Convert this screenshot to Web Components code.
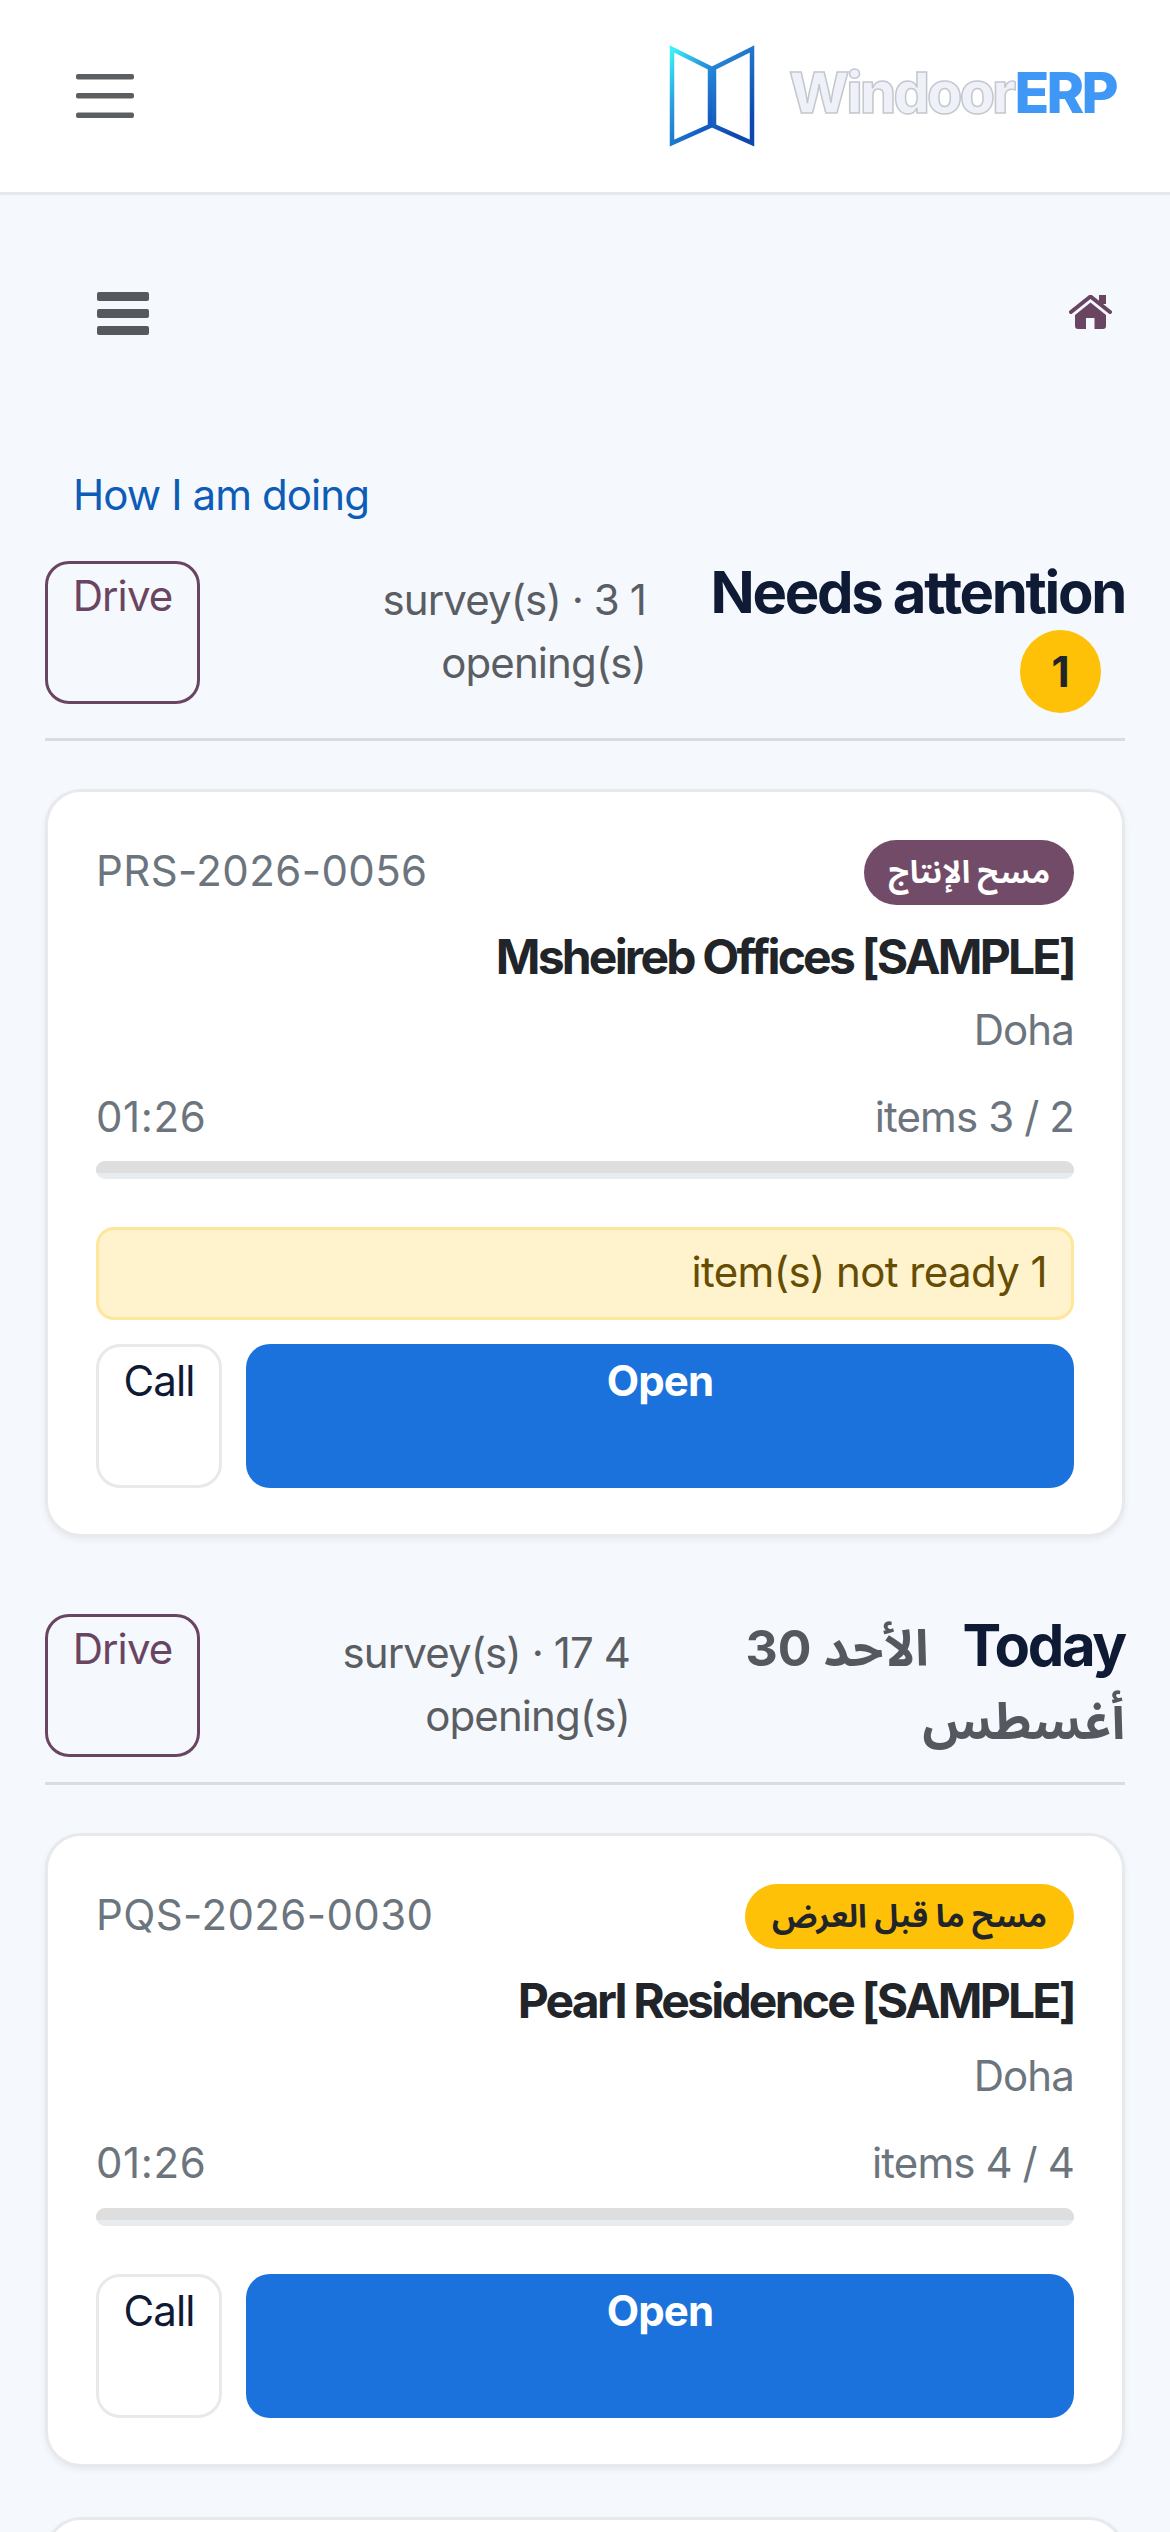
<!DOCTYPE html>
<html lang="ar" dir="rtl"><head><meta charset="utf-8"><title>WindoorERP</title>
<style>
html,body{margin:0;height:2532px;overflow:hidden;background:#f5f8fd;font-family:Inter,"Noto Sans Arabic","Noto Naskh Arabic",sans-serif;font-size:42px;color:#212529;letter-spacing:-.9px}
x-page{display:block}
</style></head><body>
<x-page>
<x-topbar></x-topbar>
<x-subbar></x-subbar>
<x-link>How I am doing</x-link>
<x-sechead sumw="300" sumgap="146" style="margin-top:31px"><span slot="title">Needs attention <x-count>1</x-count></span>1 survey(s) · 3 opening(s)</x-sechead>
<x-card code="PRS-2026-0056" status="مسح الإنتاج" tone="plum" name="Msheireb Offices [SAMPLE]" city="Doha" time="01:26" items="2 / 3 items" alert="1 item(s) not ready" style="--bm:13px"></x-card>
<x-sechead sumw="320" sumgap="110" style="margin-top:77px"><span slot="title">Today<x-date>الأحد 30 أغسطس</x-date></span>4 survey(s) · 17 opening(s)</x-sechead>
<x-card code="PQS-2026-0030" status="مسح ما قبل العرض" tone="amber" name="Pearl Residence [SAMPLE]" city="Doha" time="01:26" items="4 / 4 items" style="--cm:7px"></x-card>
<x-card blank style="margin-top:50px"></x-card>
</x-page>
<script>
function def(name,css,html){
  customElements.define(name,class extends HTMLElement{
    constructor(){super();this.attachShadow({mode:'open'});}
    connectedCallback(){this.shadowRoot.innerHTML='<style>'+css+'</style>'+(typeof html==='function'?html(this):html);}
  });
}
const burger=`<svg width="58" height="44" viewBox="0 0 58 44" fill="#5c5f62"><rect y="0" width="58" height="5.500" rx="2"/><rect y="19" width="58" height="5.500" rx="2"/><rect y="38.500" width="58" height="5.500" rx="2"/></svg>`;
def('x-topbar',`:host{display:flex;direction:ltr;justify-content:space-between;align-items:center;box-sizing:border-box;height:195px;background:#fff;border-bottom:3px solid #e6e8eb;padding:0 54px 0 76px}
svg{display:block}.logo{display:flex;align-items:center;gap:34px}
.word{font:800 57px/1 Inter,sans-serif;letter-spacing:-2.7px;color:#eef1f8;-webkit-text-stroke:1.5px #c4c7cd;margin-top:-8px}
.word b{font-weight:800;color:#3f97f6;-webkit-text-stroke:0}`,
`${burger}<div class="logo"><svg width="86" height="102" viewBox="0 0 86 102" fill="none" stroke-width="4.500"><defs>
<linearGradient id="a" x1="0" y1="0" x2=".6" y2="1"><stop offset="0" stop-color="#3df2f7"/><stop offset=".45" stop-color="#2a9bdc"/><stop offset="1" stop-color="#1259c4"/></linearGradient>
<linearGradient id="b" x1="0" y1="0" x2=".4" y2="1"><stop offset="0" stop-color="#2a8fdc"/><stop offset="1" stop-color="#0e47ae"/></linearGradient></defs>
<path d="M3 4 41 23V81L3 98Z" stroke="url(#a)"/><path d="M83 4 45 23V81L83 98Z" stroke="url(#b)"/></svg>
<div class="word">Windoor<b>ERP</b></div></div>`);
def('x-subbar',`:host{display:flex;direction:ltr;justify-content:space-between;align-items:center;height:240px;padding:0 58px 3px 97px;box-sizing:border-box}svg{display:block}.h{margin-bottom:2px}`,
`<svg width="52" height="43" viewBox="0 0 52 43" fill="#55585c"><rect width="52" height="9" rx="2"/><rect y="17" width="52" height="9" rx="2"/><rect y="34" width="52" height="9" rx="2"/></svg>
<svg class="h" width="43" height="35" viewBox="0 0 43 35" fill="#6a4562"><path d="M2 17 21.500 1.500 41 17" fill="none" stroke="#6a4562" stroke-width="4" stroke-linecap="round" stroke-linejoin="round"/><rect x="30" width="7" height="9"/><path d="M21.500 7.500 6 20v11a3 3 0 0 0 3 3h8V23h8.500v11H34a3 3 0 0 0 3-3V20Z"/></svg>`);
def('x-link',`:host{display:block;direction:ltr;padding:28px 0 0 73px;height:95px;box-sizing:border-box;color:#0d5cb6;line-height:63px}`,`<slot></slot>`);
def('x-count',`:host{display:inline-block;width:81px;height:83px;margin-top:3px;border-radius:50%;background:#ffc107;color:#212529;font:700 42px/83px Inter,sans-serif;letter-spacing:0;text-align:center;vertical-align:top;margin-inline-start:24px}`,`<slot></slot>`);
def('x-date',`:host{color:#55595f;margin-inline-start:34px;font-weight:700;font-size:50px}`,`<slot></slot>`);
def('x-sechead',`:host{display:flex;align-items:flex-start;margin:0 45px;padding-bottom:25px;border-bottom:3px solid #d9dde3}
.t{flex:1;min-width:0;margin-top:-4px;font:700 58px/70px Inter,"Noto Sans Arabic","Noto Naskh Arabic",sans-serif;letter-spacing:-2.3px;color:#0f1a35}
.s{color:#5a5e63;line-height:63px;margin-top:7px;text-align:start}
.d{box-sizing:border-box;width:155px;height:143px;border:3px solid #6a4562;border-radius:24px;color:#6a4562;text-align:center;line-height:63px}`,
h=>`<div class="t"><slot name="title"></slot></div><div class="s" style="width:${h.getAttribute('sumw')}px;margin-inline-end:${h.getAttribute('sumgap')}px"><slot></slot></div><div class="d" role="button">Drive</div>`);
def('x-card',`:host{display:block;margin:48px 45px 0;background:#fff;border:3px solid #e7e9ec;border-radius:36px;box-shadow:0 3px 6px rgba(0,0,0,.06);padding:48px 48px 46px;box-sizing:border-box}
.top,.meta{display:flex;justify-content:space-between;align-items:center}
.code,.time{direction:ltr;color:#6c757d}.code{letter-spacing:.4px;margin-top:-4px}.time{letter-spacing:.6px}
.pill{height:65px;line-height:63px;border-radius:33px;padding:0 27px;font-weight:700;font-size:32px}
.plum{background:#714b67;color:#fff;padding:0 24px;font-size:31px}.amber{background:#ffc107;color:#212529}
.name{font-weight:700;font-size:48px;letter-spacing:-2.8px;line-height:72px;margin-top:16px;color:#212529}
.city{color:#6c757d;line-height:63px;margin-top:var(--cm,5px)}
.meta{color:#6c757d;line-height:63px;margin-top:24px}
.bar{height:18px;border-radius:9px;background:#e9ecef;overflow:hidden;margin-top:var(--bm,14px)}.bar i{display:block;height:12px;background:#dedede}
.alert{box-sizing:border-box;height:93px;margin-top:48px;background:#fff3cd;border:3px solid #ffe69c;border-radius:18px;padding:0 24px;color:#664d03;line-height:84px;letter-spacing:-.6px}
.btns{display:flex;gap:24px;margin-top:48px}
.btns div{box-sizing:border-box;height:144px;text-align:center;line-height:63px;border-radius:24px}
.open{flex:1;background:#1b72dc;color:#fff;font-weight:700;padding-top:5px}
.call{width:126px;background:#fff;border:3px solid #e9e9e9;color:#0f1a35;padding-top:2px}
.alert+.btns{margin-top:24px}`,
h=>{const g=a=>h.getAttribute(a);if(h.hasAttribute('blank'))return '<div style="height:500px"></div>';
return `<div class="top"><span class="pill ${g('tone')}">${g('status')}</span><span class="code">${g('code')}</span></div>
<div class="name">${g('name')}</div><div class="city">${g('city')}</div>
<div class="meta"><span>${g('items')}</span><span class="time">${g('time')}</span></div><div class="bar"><i></i></div>
${g('alert')?`<div class="alert">${g('alert')}</div>`:''}
<div class="btns"><div class="open" role="button">Open</div><div class="call" role="button">Call</div></div>`});
</script>
</body></html>
